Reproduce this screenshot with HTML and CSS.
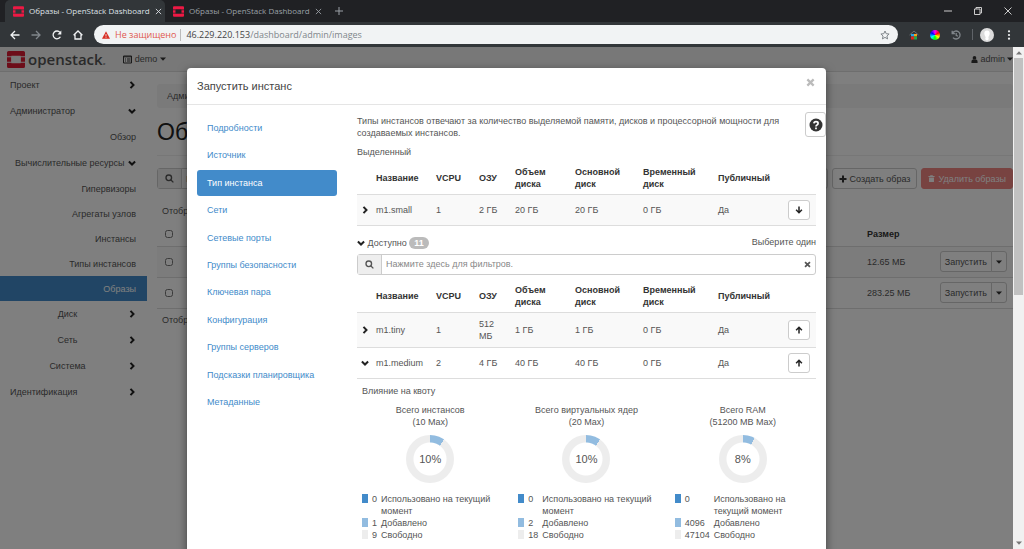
FILE: index.html
```html
<!doctype html>
<html lang="ru">
  <head>
    <meta charset="UTF-8" />
    <meta name="viewport" content="width=device-width, initial-scale=1.0" />
    <title>Образы - OpenStack Dashboard</title>
    <link rel="stylesheet" href="styles.css">
  </head>
  <body>
    <svg class="sprite" aria-hidden="true">
      <symbol id="logo" viewBox="0 0 18 17">
        <path d="M0 5.3V1.6Q0 0 1.6 0h14.8Q18 0 18 1.6v3.7h-4.4v-.6H4.4v.6zM0 6.3h4.1v4.4H0zM13.9 6.3H18v4.4h-4.1zM0 11.7v3.7Q0 17 1.6 17h14.8q1.6 0 1.6-1.6v-3.7h-4.4v.6H4.4v-.6z" />
      </symbol>
      <symbol id="right" viewBox="0 0 8 8"><path d="M2.5 .9l3 3.1-3 3.1" class="line thick" /></symbol>
      <symbol id="down" viewBox="0 0 8 8"><path d="M.9 2.5L4 5.5l3.1-3" class="line thick" /></symbol>
      <symbol id="search" viewBox="0 0 10 10"><circle cx="4.2" cy="4.2" r="3.1" class="line bold" /><path d="M6.3 6.3l3 3" class="line bold" /></symbol>
      <symbol id="arrow-down" viewBox="0 0 8 8"><path d="M4 .5v6M1.1 3.8L4 6.7l2.9-2.9" class="line bold" /></symbol>
      <symbol id="arrow-up" viewBox="0 0 8 8"><path d="M4 7.5v-6M1.1 4.2L4 1.3l2.9 2.9" class="line bold" /></symbol>
      <symbol id="cross" viewBox="0 0 8 8"><path d="M1.2 1.2l5.6 5.6M6.8 1.2L1.2 6.8" class="line thick" /></symbol>
      <symbol id="caret" viewBox="0 0 6 4"><path d="M0 .5h6L3 3.7z" /></symbol>
      <symbol id="thin-cross" viewBox="0 0 8 8"><path d="M1 1l6 6M7 1L1 7" class="line" /></symbol>
    </svg>

    <div class="browser">
      <div class="tabs">
        <div class="tab active">
          <svg class="favicon"><use href="#logo" /></svg>
          <span class="tab-title">Образы - OpenStack Dashboard</span>
          <svg class="i7"><use href="#thin-cross" /></svg>
        </div>
        <div class="tab">
          <svg class="favicon"><use href="#logo" /></svg>
          <span class="tab-title">Образы - OpenStack Dashboard</span>
          <svg class="i7"><use href="#thin-cross" /></svg>
        </div>
        <svg class="new-tab" viewBox="0 0 8 8"><path d="M4 0v8M0 4h8" class="line" /></svg>
        <div class="window-buttons">
          <svg viewBox="0 0 8 8"><path d="M0 4h8" class="line" /></svg>
          <svg viewBox="0 0 8 8"><path d="M.5 2h5.5v5.5H.5zM2 2V.5h5.5V6H6" class="line" /></svg>
          <svg viewBox="0 0 8 8"><path d="M.5 .5l7 7M7.5 .5l-7 7" class="line" /></svg>
        </div>
      </div>

      <div class="toolbar">
        <svg class="nav-icon" viewBox="0 0 10 10"><path d="M9.5 5H1.2M5 1L1 5l4 4" class="line mid" /></svg>
        <svg class="nav-icon dim" viewBox="0 0 10 10"><path d="M.5 5h8.3M5 1l4 4-4 4" class="line mid" /></svg>
        <svg class="nav-icon" viewBox="0 0 10 10"><path d="M8.4 6.8A3.9 3.9 0 1 1 8 2.4" class="line mid" /><path d="M9.3 .4v4H5.4z" /></svg>
        <svg class="nav-icon" viewBox="0 0 10 10"><path d="M.6 5.2L5 1l4.4 4.2M2 4.5V9h6V4.5" class="line mid" /></svg>
        <div class="address">
          <svg class="warn" viewBox="0 0 8 8"><path d="M4 .2L8 7.8H0z" /><path d="M3.6 3h.8v2.2h-.8zM3.6 5.8h.8v.9h-.8z" fill="#f1f3f4" /></svg>
          <span class="insecure">Не защищено</span>
          <span class="url"><b>46.229.220.153</b>/dashboard/admin/images</span>
          <svg class="star" viewBox="0 0 10 10"><path d="M5 1l1.2 2.7 2.9.3-2.2 2 .7 2.9L5 7.4 2.4 8.9 3.1 6 .9 4l2.9-.3z" class="line" /></svg>
        </div>
        <svg class="extension" viewBox="0 0 10 10">
          <path d="M.5 5L5 1l4.5 4" fill="none" stroke="#6b6f72" />
          <path d="M2 4h3v2.5H2z" fill="#1ea5e8" /><path d="M5 4h3v2.5H5z" fill="#f6a21b" />
          <path d="M2 6.5h3v3H2z" fill="#e0261c" /><path d="M5 6.5h3v3H5z" fill="#23a84a" />
        </svg>
        <span class="wheel"></span>
        <svg class="extension dim" viewBox="0 0 10 10"><path d="M1.6 3A4 4 0 1 1 2 7.6M1.2 .8v2.7h2.7M5.2 3v2.3l1.7 1" class="line mid" /></svg>
        <span class="divider"></span>
        <svg class="avatar" viewBox="0 0 14 14"><circle cx="7" cy="7" r="7" fill="#dcdcdc" /><path d="M7 2.5c1.8 0 2.7 1.2 2.7 2.8S8.8 8.500 8.300 9c.3 1.500 1.200 2.500-1.300 3.500C4.500 11.500 5.400 10.500 5.700 9 5.200 8.500 4.300 6.900 4.300 5.300S5.200 2.500 7 2.500z" fill="#fff" /></svg>
        <svg class="menu" viewBox="0 0 4 10"><circle cx="2" cy="1.3" r="1.1" /><circle cx="2" cy="5" r="1.1" /><circle cx="2" cy="8.7" r="1.1" /></svg>
      </div>

      <div class="viewport">
        <div class="page">
          <header class="topbar">
            <svg class="brand-mark"><use href="#logo" /></svg>
            <span class="brand">openstack<i>.</i></span>
            <a href="#" class="project">
              <svg class="i9" viewBox="0 0 9 8"><path d="M.5 .5h8v7h-8zM.5 1.3h8M2 3.500h1M4 3.500h3.500M2 5.500h1M4 5.500h3.500" class="line" /></svg>
              demo
              <svg class="caret"><use href="#caret" /></svg>
            </a>
            <a href="#" class="user">
              <svg class="i7" viewBox="0 0 8 8"><circle cx="4" cy="2.2" r="2.1" /><path d="M.5 8V6.3Q.5 4.3 2.5 4.1q1.5 1 3 0 2 .2 2 2.2V8z" /></svg>
              admin
              <svg class="caret"><use href="#caret" /></svg>
            </a>
          </header>

          <div class="columns">
            <nav class="sidebar">
              <a href="#" class="group">Проект <svg class="i8"><use href="#right" /></svg></a>
              <a href="#" class="group">Администратор <svg class="i8"><use href="#down" /></svg></a>
              <a href="#" class="item overview">Обзор</a>
              <a href="#" class="group sub">Вычислительные ресурсы <svg class="i8"><use href="#down" /></svg></a>
              <a href="#" class="item">Гипервизоры</a>
              <a href="#" class="item">Агрегаты узлов</a>
              <a href="#" class="item">Инстансы</a>
              <a href="#" class="item">Типы инстансов</a>
              <a href="#" class="item current">Образы</a>
              <a href="#" class="group center"><span>Диск</span> <svg class="i8"><use href="#right" /></svg></a>
              <a href="#" class="group center"><span>Сеть</span> <svg class="i8"><use href="#right" /></svg></a>
              <a href="#" class="group center"><span>Система</span> <svg class="i8"><use href="#right" /></svg></a>
              <a href="#" class="group">Идентификация <svg class="i8"><use href="#right" /></svg></a>
            </nav>

            <main class="main">
              <div class="breadcrumb">Администратор</div>
              <h1>Образы</h1>
              <div class="actions">
                <label class="filter">
                  <span class="addon"><svg class="i9"><use href="#search" /></svg></span>
                  <input type="text" placeholder="Нажмите" aria-label="Фильтр образов">
                </label>
                <button class="btn"><svg class="i8" viewBox="0 0 8 8"><path d="M4 .5v7M.5 4h7" class="line thick" /></svg> Создать образ</button>
                <button class="btn danger"><svg class="i7" viewBox="0 0 8 8"><path d="M.5 1.2h2V.2h3v1h2v1h-7zM1.2 2.8h5.6V8H1.2z" /></svg> Удалить образы</button>
              </div>
              <p class="count">Отображено</p>
              <table class="images">
                <thead>
                  <tr><th><input type="checkbox" aria-label="Выбрать все"></th><th class="size">Размер</th><th class="launch"></th></tr>
                </thead>
                <tbody>
                  <tr>
                    <td><input type="checkbox" aria-label="Выбрать образ 1"></td>
                    <td>12.65 МБ</td>
                    <td><div class="split"><button class="btn">Запустить</button><button class="btn" aria-label="Ещё"><svg class="caret"><use href="#caret" /></svg></button></div></td>
                  </tr>
                  <tr>
                    <td><input type="checkbox" aria-label="Выбрать образ 2"></td>
                    <td>283.25 МБ</td>
                    <td><div class="split"><button class="btn">Запустить</button><button class="btn" aria-label="Ещё"><svg class="caret"><use href="#caret" /></svg></button></div></td>
                  </tr>
                </tbody>
              </table>
              <p class="count">Отображено</p>
            </main>
          </div>

          <div class="backdrop">
            <section class="modal" role="dialog" aria-labelledby="modal-title">
              <header class="modal-header">
                <h2 id="modal-title">Запустить инстанс</h2>
                <button class="close" aria-label="Закрыть"><svg class="i9"><use href="#cross" /></svg></button>
              </header>
              <div class="modal-body">
                <nav class="steps">
                  <a href="#">Подробности</a>
                  <a href="#">Источник</a>
                  <a href="#" class="active">Тип инстанса</a>
                  <a href="#">Сети</a>
                  <a href="#">Сетевые порты</a>
                  <a href="#">Группы безопасности</a>
                  <a href="#">Ключевая пара</a>
                  <a href="#">Конфигурация</a>
                  <a href="#">Группы серверов</a>
                  <a href="#">Подсказки планировщика</a>
                  <a href="#">Метаданные</a>
                </nav>

                <div class="step">
                  <p class="intro">Типы инстансов отвечают за количество выделяемой памяти, дисков и процессорной мощности для создаваемых инстансов.</p>
                  <p class="allocated">Выделенный</p>
                  <table class="flavors">
                    <colgroup><col class="c-toggle"><col class="c-name"><col class="c-vcpu"><col class="c-ram"><col class="c-disk"><col class="c-root"><col class="c-temp"><col class="c-public"><col class="c-action"></colgroup>
                    <thead>
                      <tr><th></th><th>Название</th><th>VCPU</th><th>ОЗУ</th><th>Объем диска</th><th>Основной диск</th><th>Временный диск</th><th>Публичный</th><th></th></tr>
                    </thead>
                    <tbody>
                      <tr class="striped">
                        <td><svg class="i8"><use href="#right" /></svg></td><td>m1.small</td><td>1</td><td>2 ГБ</td><td>20 ГБ</td><td>20 ГБ</td><td>0 ГБ</td><td>Да</td>
                        <td><button class="btn move" aria-label="Убрать"><svg class="i8"><use href="#arrow-down" /></svg></button></td>
                      </tr>
                    </tbody>
                  </table>

                  <div class="available">
                    <span><svg class="i8"><use href="#down" /></svg> Доступно <span class="badge">11</span></span>
                    <span class="hint">Выберите один</span>
                  </div>
                  <label class="filter">
                    <span class="addon"><svg class="i9"><use href="#search" /></svg></span>
                    <input type="text" placeholder="Нажмите здесь для фильтров." aria-label="Фильтр типов">
                    <svg class="i7 clear"><use href="#cross" /></svg>
                  </label>

                  <table class="flavors">
                    <colgroup><col class="c-toggle"><col class="c-name"><col class="c-vcpu"><col class="c-ram"><col class="c-disk"><col class="c-root"><col class="c-temp"><col class="c-public"><col class="c-action"></colgroup>
                    <thead>
                      <tr><th></th><th>Название</th><th>VCPU</th><th>ОЗУ</th><th>Объем диска</th><th>Основной диск</th><th>Временный диск</th><th>Публичный</th><th></th></tr>
                    </thead>
                    <tbody>
                      <tr class="striped">
                        <td><svg class="i8"><use href="#right" /></svg></td><td>m1.tiny</td><td>1</td><td>512 МБ</td><td>1 ГБ</td><td>1 ГБ</td><td>0 ГБ</td><td>Да</td>
                        <td><button class="btn move" aria-label="Выбрать m1.tiny"><svg class="i8"><use href="#arrow-up" /></svg></button></td>
                      </tr>
                      <tr>
                        <td><svg class="i8"><use href="#down" /></svg></td><td>m1.medium</td><td>2</td><td>4 ГБ</td><td>40 ГБ</td><td>40 ГБ</td><td>0 ГБ</td><td>Да</td>
                        <td><button class="btn move" aria-label="Выбрать m1.medium"><svg class="i8"><use href="#arrow-up" /></svg></button></td>
                      </tr>
                    </tbody>
                  </table>

                  <div class="quota">
                    <p>Влияние на квоту</p>
                    <div class="charts">
                      <div class="chart">
                        <h3>Всего инстансов<br>(10 Max)</h3>
                        <div class="donut" style="--added: 10%"><span>10%</span></div>
                        <div class="legend">
                          <i class="used"></i><span>0</span><span>Использовано на текущий момент</span>
                          <i class="added"></i><span>1</span><span>Добавлено</span>
                          <i></i><span>9</span><span>Свободно</span>
                        </div>
                      </div>
                      <div class="chart">
                        <h3>Всего виртуальных ядер<br>(20 Max)</h3>
                        <div class="donut" style="--added: 10%"><span>10%</span></div>
                        <div class="legend">
                          <i class="used"></i><span>0</span><span>Использовано на текущий момент</span>
                          <i class="added"></i><span>2</span><span>Добавлено</span>
                          <i></i><span>18</span><span>Свободно</span>
                        </div>
                      </div>
                      <div class="chart">
                        <h3>Всего RAM<br>(51200 MB Max)</h3>
                        <div class="donut" style="--added: 8%"><span>8%</span></div>
                        <div class="legend">
                          <i class="used"></i><span>0</span><span>Использовано на текущий момент</span>
                          <i class="added"></i><span>4096</span><span>Добавлено</span>
                          <i></i><span>47104</span><span>Свободно</span>
                        </div>
                      </div>
                    </div>
                  </div>
                </div>
                <button class="btn help" aria-label="Справка">
                  <svg viewBox="0 0 14 14"><circle cx="7" cy="7" r="6.5" /><path d="M4.9 5.4Q5 3.6 7 3.6t2.1 1.6Q9.1 6.3 8 6.9 7 7.4 7 8.5M7 9.6v1.6" stroke="#fff" stroke-width="1.7" fill="none" /></svg>
                </button>
              </div>
            </section>
          </div>
        </div>

        <div class="scrollbar">
          <svg class="caret up"><use href="#caret" /></svg>
          <span class="thumb"></span>
          <svg class="caret"><use href="#caret" /></svg>
        </div>
      </div>
    </div>
  </body>
</html>
```
FILE: styles.css
```css
* {
  box-sizing: border-box;
}
body {
  margin: 0;
  font: 9px/12px "Liberation Sans", Arial, sans-serif;
  color: #555;
}
p, h1, h2, h3 {
  margin: 0;
  font-weight: normal;
}
a {
  color: inherit;
  text-decoration: none;
}
svg {
  flex: none;
  fill: currentColor;
}
button, input {
  font: inherit;
  color: inherit;
}
.sprite {
  display: none;
}
.line {
  fill: none;
  stroke: currentColor;
}
.mid {
  stroke-width: 1.3;
}
.bold {
  stroke-width: 1.5;
}
.thick {
  stroke-width: 2;
}
.i7 {
  width: 7px;
  height: 7px;
}
.i8 {
  width: 8px;
  height: 8px;
}
.i9 {
  width: 9px;
  height: 9px;
}
.caret {
  width: 6px;
  height: 4px;
}

/* Browser frame */
.browser {
  display: flex;
  flex-direction: column;
  height: 100vh;
  overflow: hidden;
}
.tabs {
  display: flex;
  align-items: center;
  height: 22px;
  padding-left: 5px;
  background: #202124;
  color: #9aa0a6;
  font-family: "Open Sans", sans-serif;
  font-size: 8px;
}
.tab {
  display: flex;
  align-items: center;
  gap: 5px;
  width: 160px;
  height: 22px;
  padding: 0 8px;
}
.tab.active {
  background: #323639;
  color: #dee1e6;
  border-radius: 5px 5px 0 0;
}
.tab-title {
  flex: 1;
  white-space: nowrap;
}
.favicon {
  width: 11px;
  height: 11px;
  color: #ed1944;
}
.new-tab {
  width: 8px;
  height: 8px;
  margin-left: 10px;
}
.window-buttons {
  display: flex;
  gap: 22px;
  margin-left: auto;
  padding-right: 12px;
  color: #ccc;
}
.window-buttons svg {
  width: 8px;
  height: 8px;
}
.toolbar {
  display: flex;
  align-items: center;
  height: 25px;
  padding: 0 13px 0 10px;
  background: #323639;
  color: #f1f3f4;
  font-family: "Open Sans", sans-serif;
}
.nav-icon {
  width: 10px;
  height: 10px;
  margin-right: 11px;
}
.dim {
  color: #80868b;
}
.address {
  display: flex;
  flex: 1;
  align-items: center;
  height: 19px;
  padding: 0 8px;
  border-radius: 10px;
  background: #f1f3f4;
  color: #80868b;
}
.warn {
  width: 8px;
  height: 8px;
  color: #d93025;
}
.insecure {
  margin: 0 5px;
  padding-right: 4px;
  border-right: 1px solid #bbb;
  color: #e0574e;
}
.url b {
  font-weight: normal;
  color: #444;
}
.star {
  width: 10px;
  height: 10px;
  margin-left: auto;
}
.extension {
  width: 10px;
  height: 10px;
  margin-left: 11px;
}
.wheel {
  width: 10px;
  height: 10px;
  margin-left: 11px;
  border-radius: 50%;
  background: conic-gradient(#f0f, #f00, #ff0, #0f0, #0ff, #00f, #f0f);
}
.divider {
  width: 1px;
  height: 11px;
  margin: 0 7px 0 11px;
  background: #5f6368;
}
.avatar {
  width: 14px;
  height: 14px;
}
.menu {
  width: 4px;
  height: 10px;
  margin-left: 13px;
}
.viewport {
  display: flex;
  flex: 1;
  min-height: 0;
}
.scrollbar {
  display: flex;
  flex-direction: column;
  align-items: center;
  width: 11px;
  padding: 4px 0;
  background: #f1f1f1;
  color: #777;
}
.scrollbar .up {
  transform: rotate(180deg);
}
.thumb {
  flex: 0 0 48%;
  width: 9px;
  margin: 3px 0 auto;
  background: #c1c1c1;
}

/* Dashboard */
.page {
  position: relative;
  flex: 1;
  min-width: 0;
  overflow: hidden;
  background: #fff;
}
.topbar {
  display: flex;
  align-items: center;
  height: 25px;
  padding-left: 7px;
  border-bottom: 1px solid #ddd;
  background: #f0f0f0;
}
.brand-mark {
  width: 18px;
  height: 17px;
  color: #da1a32;
}
.brand {
  margin: 0 16px 0 3px;
  font: 600 15px/20px "Open Sans", sans-serif;
  color: #555;
}
.brand i {
  color: #999;
}
.project, .user {
  display: flex;
  align-items: center;
  gap: 3px;
}
.user {
  gap: 2px;
  margin-left: auto;
}
.project svg, .user svg {
  color: #333;
}
.columns {
  display: flex;
}
.sidebar {
  width: 147px;
}
.group, .item {
  display: flex;
  align-items: center;
  height: 26px;
  padding: 0 11px 0 10px;
}
.group {
  justify-content: space-between;
}
.group svg {
  color: #222;
}
.sub {
  padding-left: 15px;
}
.center {
  padding-left: 7px;
}
.center span {
  flex: 1;
  text-align: center;
}
.item {
  justify-content: flex-end;
  height: 25px;
}
.overview {
  height: 26px;
}
.current {
  background: #428bca;
  color: #fff;
}
.main {
  flex: 1;
  min-width: 0;
  padding: 12px 0 0 10px;
}
.breadcrumb {
  padding: 6px 10px;
  border-radius: 3px;
  background: #f5f5f5;
}
h1 {
  padding: 10px 0 9px;
  border-bottom: 1px solid #eee;
  font-size: 23px;
  line-height: 28px;
  color: #222;
}
.actions {
  display: flex;
  gap: 4px;
  margin-top: 12px;
}
.actions .filter {
  flex: 1;
}
.filter {
  display: flex;
  align-items: center;
  height: 21px;
  border: 1px solid #ccc;
  border-radius: 3px;
  background: #fff;
}
.addon {
  display: grid;
  place-items: center;
  width: 24px;
  height: 19px;
  border-right: 1px solid #ccc;
  background: #eee;
}
.filter input {
  flex: 1;
  min-width: 0;
  padding: 0 4px;
  border: 0;
  background: none;
}
.filter input::placeholder {
  color: #888;
}
.clear {
  margin-right: 4px;
}
.btn {
  display: flex;
  align-items: center;
  justify-content: center;
  gap: 3px;
  height: 21px;
  padding: 0 6px;
  border: 1px solid #ccc;
  border-radius: 3px;
  background: #fff;
  white-space: nowrap;
}
.btn svg {
  color: #333;
}
.danger {
  border-color: #f08683;
  background: #f08683;
  color: #fff;
}
.danger svg {
  color: #fff;
}
.count {
  padding: 16px 5px 6px;
}
.images {
  width: 100%;
  border-collapse: collapse;
}
.images th, .images td {
  height: 31px;
  padding: 0 8px;
  border-bottom: 1px solid #ddd;
  text-align: left;
}
.images th {
  height: 23px;
  color: #333;
}
.images .size {
  width: 75px;
}
.images .launch {
  width: 79px;
}
.images td:last-child {
  padding: 0 6px 0 0;
}
.images tbody tr:first-child {
  background: #f9f9f9;
}
.images input {
  display: block;
  width: 8px;
  height: 8px;
  margin: 0;
}
.images + .count {
  padding-top: 5px;
}
.split {
  display: flex;
  justify-content: flex-end;
}
.split .btn {
  padding: 0 4px;
}
.split .btn:first-child {
  border-radius: 3px 0 0 3px;
}
.split .btn:last-child {
  margin-left: -1px;
  border-radius: 0 3px 3px 0;
}

/* Launch dialog */
.backdrop {
  position: absolute;
  inset: 0;
  padding-top: 21px;
  background: rgba(0, 0, 0, 0.5);
}
.modal {
  width: 63%;
  min-width: 639px;
  margin: 0 auto;
  border-radius: 4px;
  background: #fff;
  box-shadow: 0 3px 10px rgba(0, 0, 0, 0.5);
}
.modal-header {
  display: flex;
  align-items: center;
  justify-content: space-between;
  height: 37px;
  padding: 0 11px 0 10px;
  border-bottom: 1px solid #e5e5e5;
}
h2 {
  font-size: 11px;
  line-height: 16px;
  color: #444;
}
.close {
  padding: 0 0 4px;
  border: 0;
  background: none;
  color: #bbb;
}
.modal-body {
  position: relative;
  display: flex;
  gap: 20px;
  padding: 10px;
}
.steps {
  display: flex;
  flex-direction: column;
  justify-content: space-between;
  width: 140px;
  height: 300px;
}
.steps a {
  padding: 7px 10px;
  border-radius: 3px;
  color: #428bca;
}
.steps .active {
  background: #428bca;
  color: #fff;
}
.step {
  flex: 1;
  min-width: 0;
}
.intro {
  padding-right: 20px;
}
.allocated {
  margin: 7px 0 4px;
}
.flavors {
  width: 100%;
  table-layout: fixed;
  border-collapse: collapse;
}
.flavors th, .flavors td {
  height: 31px;
  padding: 0 5px;
  border-bottom: 1px solid #ddd;
  text-align: left;
}
.flavors td {
  padding: 5px;
}
.flavors th {
  height: 32px;
  color: #333;
}
.flavors td:first-child {
  padding: 0 0 0 4px;
}
.flavors svg {
  display: block;
  color: #222;
}
.flavors + .available {
  margin-top: 11px;
}
.c-toggle {
  width: 14px;
}
.c-name, .c-disk {
  width: 60px;
}
.c-vcpu {
  width: 43px;
}
.c-ram {
  width: 36px;
}
.c-root {
  width: 68px;
}
.c-temp {
  width: 75px;
}
.c-public {
  width: 70px;
}
.c-action {
  width: 33px;
}
.striped {
  background: #f9f9f9;
}
.move {
  width: 22px;
  height: 20px;
  padding: 0;
}
.available {
  display: flex;
  justify-content: space-between;
  height: 17px;
}
.available svg {
  vertical-align: middle;
  color: #222;
}
.hint {
  line-height: 10px;
}
.badge {
  display: inline-block;
  padding: 0 5px;
  border-radius: 6px;
  background: #bbb;
  color: #fff;
  font-weight: bold;
}
.filter + .flavors {
  margin-top: 6px;
}
.quota {
  padding: 6px 5px;
}
.charts {
  display: grid;
  grid-template-columns: repeat(3, 1fr);
  gap: 20px;
  margin-top: 7px;
}
h3 {
  font-size: 9px;
  line-height: 12px;
  text-align: center;
}
.donut {
  display: grid;
  place-items: center;
  width: 48px;
  height: 48px;
  margin: 7px auto 10px;
  border-radius: 50%;
  background: radial-gradient(#fff 16px, transparent 17px), conic-gradient(#92bce0 var(--added), #ededed 0);
  font-size: 11px;
}
.legend {
  display: grid;
  grid-template-columns: 6px auto 1fr;
  column-gap: 4px;
}
.legend i {
  height: 9px;
  margin-top: 1px;
  background: #ededed;
}
.legend .used {
  background: #428bca;
}
.legend .added {
  background: #92bce0;
}
.help {
  position: absolute;
  top: 7px;
  right: 0;
  width: 21px;
  height: 25px;
  padding: 0;
}
.help svg {
  width: 14px;
  height: 14px;
}
```
